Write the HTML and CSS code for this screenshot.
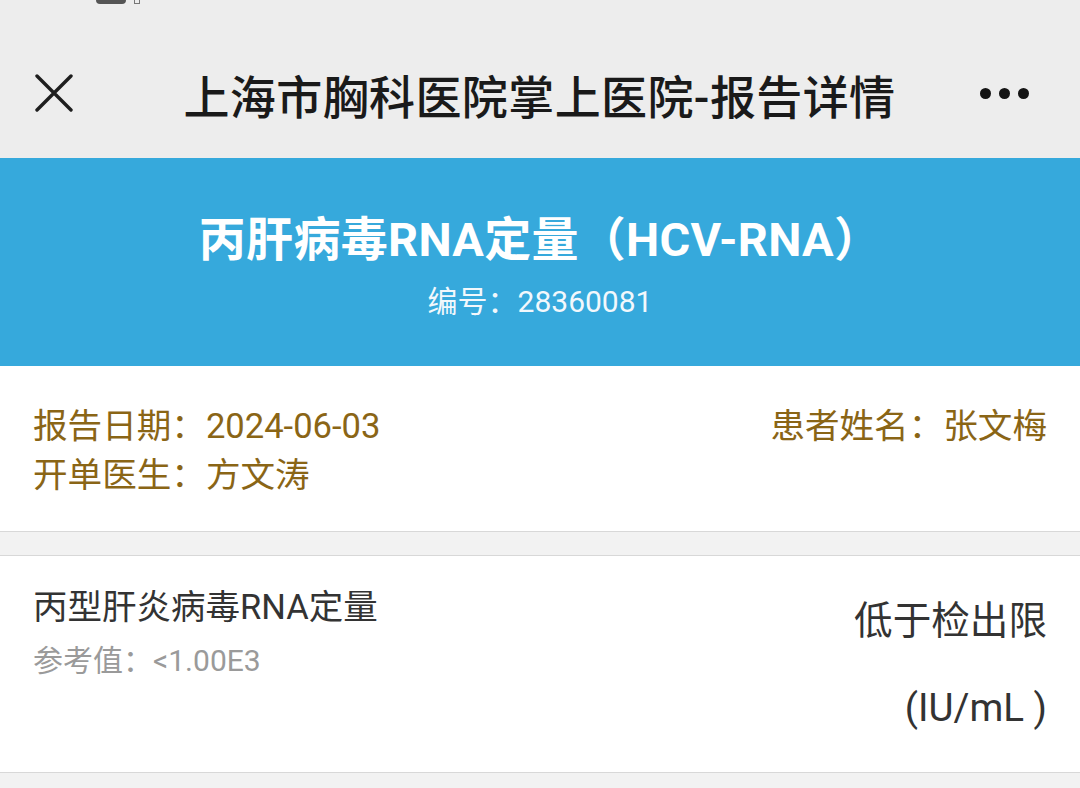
FILE: index.html
```html
<!DOCTYPE html>
<html lang="zh-CN">
<head>
<meta charset="utf-8">
<title>报告详情</title>
<link rel="stylesheet" href="styles.css">
</head>
<body>
<div class="page">
  <header class="topbar">
    <div class="status"><span class="battery"></span><span class="battery-tip"></span></div>
    <nav class="nav">
      <span class="close" aria-label="关闭">
        <svg width="38" height="38" viewBox="0 0 38 38"><path d="M2 2 L36 36 M36 2 L2 36" stroke="#1e1e1e" stroke-width="3.4" stroke-linecap="round" fill="none"/></svg>
      </span>
      <h1 class="nav-title">上海市胸科医院掌上医院-报告详情</h1>
      <span class="more" aria-label="更多"><i></i><i></i><i></i></span>
    </nav>
  </header>

  <section class="banner">
    <h2 class="banner-title">丙肝病毒RNA定量（HCV-RNA）</h2>
    <p class="banner-sub">编号：28360081</p>
  </section>

  <section class="info">
    <div class="info-left">
      <p>报告日期：2024-06-03</p>
      <p>开单医生：方文涛</p>
    </div>
    <div class="info-right">
      <p>患者姓名：张文梅</p>
    </div>
  </section>

  <div class="spacer"></div>

  <section class="result">
    <div class="result-left">
      <p class="item-name">丙型肝炎病毒RNA定量</p>
      <p class="item-ref">参考值：&lt;1.00E3</p>
    </div>
    <div class="result-right">
      <p class="item-value">低于检出限</p>
      <p class="item-unit">(IU/mL )</p>
    </div>
  </section>
</div>
</body>
</html>
```

FILE: styles.css
```css
* { box-sizing: border-box; }
html, body {
  margin: 0;
  padding: 0;
  background: #f2f2f2;
  font-family: Roboto, "Noto Sans CJK SC", sans-serif;
}
p, h1, h2 { margin: 0; }

.page {
  width: 1080px;
  min-height: 788px;
  background: #f2f2f2;
}

/* top bar */
.topbar {
  background: #ededed;
  height: 158px;
  display: flex;
  flex-direction: column;
}
.status {
  height: 36px;
  display: flex;
  align-items: flex-start;
  padding-left: 96px;
  gap: 8px;
}
.battery {
  width: 30px;
  height: 4px;
  background: #555;
  border-radius: 0 0 4px 4px;
}
.battery-tip {
  width: 6px;
  height: 4px;
  border: 1.5px solid #777;
  border-top: none;
}
.nav {
  flex: 1;
  display: flex;
  align-items: center;
  justify-content: space-between;
  padding: 0 35px 0 35px;
}
.close {
  width: 38px;
  height: 38px;
  display: flex;
  margin-top: -8px;
}
.nav-title {
  font-size: 46px;
  font-weight: 500;
  color: #1a1a1a;
  letter-spacing: 0.4px;
  margin-top: -6px;
  margin-left: 26px;
}
.more {
  display: flex;
  gap: 8px;
  margin-top: -8px;
  margin-right: 16px;
}
.more i {
  display: block;
  width: 11px;
  height: 11px;
  border-radius: 50%;
  background: #141414;
}

/* banner */
.banner {
  background: #36a9dc;
  height: 208px;
  display: flex;
  flex-direction: column;
  align-items: center;
  padding-top: 54px;
  color: #fff;
}
.banner-title {
  font-size: 47px;
  font-weight: 700;
  line-height: 56px;
  letter-spacing: 0.3px;
}
.banner-sub {
  font-size: 30px;
  line-height: 40px;
  margin-top: 14px;
  color: #f2f8fc;
}

/* info */
.info {
  background: #fff;
  height: 166px;
  border-bottom: 1px solid #d8d8d8;
  display: flex;
  justify-content: space-between;
  padding: 36px 33px 0 33px;
  color: #8a6516;
  font-size: 34.6px;
  line-height: 49px;
}

.spacer {
  height: 24px;
  background: #f2f2f2;
  border-bottom: 1px solid #d8d8d8;
}

/* result */
.result {
  background: #fff;
  height: 217px;
  border-bottom: 1px solid #d8d8d8;
  display: flex;
  justify-content: space-between;
  padding: 27px 33px 0 33px;
}
.item-name {
  font-size: 34.5px;
  line-height: 48px;
  color: #333;
}
.item-ref {
  font-size: 30px;
  line-height: 44px;
  margin-top: 8px;
  color: #9a9a9a;
}
.result-right {
  display: flex;
  flex-direction: column;
  align-items: flex-end;
  padding-top: 10px;
}
.item-value {
  font-size: 38.6px;
  line-height: 56px;
  color: #333;
}
.item-unit {
  font-size: 38.6px;
  line-height: 56px;
  margin-top: 31px;
  color: #333;
}
```
